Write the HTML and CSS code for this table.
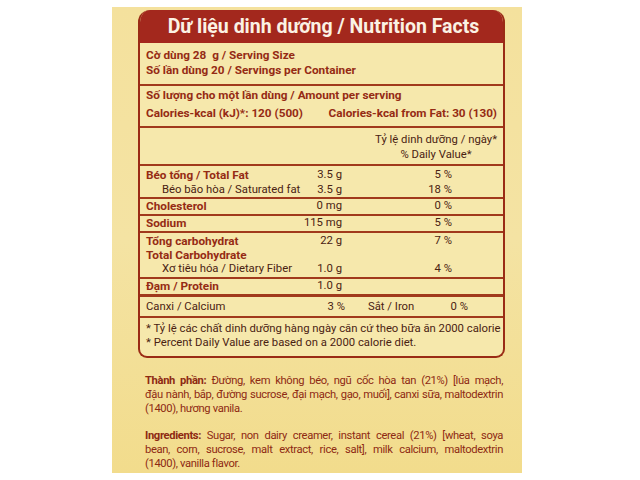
FILE: index.html
```html
<!DOCTYPE html>
<html lang="vi">
<head>
<meta charset="utf-8">
<link rel="stylesheet" href="styles.css">
</head>
<body>
<div class="pack">
  <div class="label">
    <div class="hdr">Dữ liệu dinh dưỡng / Nutrition Facts</div>
    <div class="sec serving b">
      <div>Cờ dùng 28&nbsp; g / Serving Size</div>
      <div>Số lần dùng 20 / Servings per Container</div>
    </div>
    <div class="sec amount b">
      <div>Số lượng cho một lần dùng / Amount per serving</div>
      <div class="cal"><span>Calories-kcal (kJ)*: 120 (500)</span><span>Calories-kcal from Fat: 30 (130)</span></div>
    </div>
    <div class="sec dv">
      <div class="dvbox">
        <div>Tỷ lệ dinh dưỡng / ngày*</div>
        <div>% Daily Value*</div>
      </div>
    </div>
    <div class="sec grid fat">
      <div class="n b">Béo tổng / Total Fat</div><div class="v">3.5 g</div><div class="p">5 %</div>
      <div class="n ind">Béo bão hòa / Saturated fat</div><div class="v">3.5 g</div><div class="p">18 %</div>
    </div>
    <div class="sec grid chol">
      <div class="n b">Cholesterol</div><div class="v">0 mg</div><div class="p">0 %</div>
    </div>
    <div class="sec grid sod">
      <div class="n b">Sodium</div><div class="v">115 mg</div><div class="p">5 %</div>
    </div>
    <div class="sec grid carb">
      <div class="n b">Tổng carbohydrat</div><div class="v">22 g</div><div class="p">7 %</div>
      <div class="n b">Total Carbohydrate</div><div class="v"></div><div class="p"></div>
      <div class="n ind">Xơ tiêu hóa / Dietary Fiber</div><div class="v">1.0 g</div><div class="p">4 %</div>
    </div>
    <div class="sec grid prot">
      <div class="n b">Đạm / Protein</div><div class="v">1.0 g</div><div class="p"></div>
    </div>
    <div class="sec minerals">
      <span class="mn">Canxi / Calcium</span><span class="mv">3 %</span><span class="mn2">Sắt / Iron</span><span class="mv2">0 %</span>
    </div>
    <div class="sec foot">
      <div>* Tỷ lệ các chất dinh dưỡng hàng ngày căn cứ theo bữa ăn 2000 calorie</div>
      <div>* Percent Daily Value are based on a 2000 calorie diet.</div>
    </div>
  </div>
  <div class="ingr first">
    <span class="ln"><b>Thành phần:</b> Đường, kem không béo, ngũ cốc hòa tan (21%) [lúa mạch,</span>
    <span class="ln">đậu nành, bắp, đường sucrose, đại mạch, gạo, muối], canxi sữa, maltodextrin</span>
    <span class="ln last">(1400), hương vanila.</span>
  </div>
  <div class="ingr second">
    <span class="ln"><b>Ingredients:</b> Sugar, non dairy creamer, instant cereal (21%) [wheat, soya</span>
    <span class="ln">bean, corn, sucrose, malt extract, rice, salt], milk calcium, maltodextrin</span>
    <span class="ln last">(1400), vanilla flavor.</span>
  </div>
</div>
</body>
</html>
```
FILE: styles.css
```css
html, body {
  margin: 0;
  padding: 0;
  background: #ffffff;
}
body {
  font-family: Roboto, "Liberation Sans", sans-serif;
  color: #4a2212;
}
.pack {
  margin: 7px 0 0 112px;
  width: 410px;
  height: 466px;
  box-sizing: border-box;
  padding: 3px 0 0 26px;
  background: linear-gradient(180deg, #f4e19d 0%, #f4e3a3 50%, #f2dc8c 100%);
}
.label {
  width: 367px;
  box-sizing: border-box;
  border: 2px solid #9a2b15;
  border-top: none;
  border-radius: 12px 12px 9px 9px;
  overflow: hidden;
  background: #f6e8ac;
}
.hdr {
  background: #a3281d;
  color: #fbf2e4;
  font-weight: 700;
  font-size: 19.5px;
  height: 33px;
  line-height: 33px;
  text-align: center;
  padding-left: 4px;
}
.sec {
  border-top: 2px solid #a13a1c;
  font-size: 11.3px;
  line-height: 14.5px;
  padding: 0 6px;
  white-space: nowrap;
}
.b {
  font-weight: 700;
  font-size: 11.75px;
  color: #952b14;
}
.serving {
  border-top: none;
  padding-top: 5px;
  padding-bottom: 7px;
}
.amount {
  padding-top: 2px;
  padding-bottom: 6px;
}
.cal {
  display: flex;
  justify-content: space-between;
  margin-top: 3px;
}
.dv {
  display: flex;
  justify-content: flex-end;
  padding-top: 5px;
  padding-bottom: 2px;
}
.dvbox {
  text-align: center;
}
.grid {
  display: grid;
  grid-template-columns: 150px 46px 110px;
}
.v, .p {
  text-align: right;
}
.ind {
  padding-left: 16px;
}
.fat {
  padding-top: 2px;
}
.sod {
  padding-bottom: 1px;
}
.carb {
  padding-top: 1px;
  line-height: 14.2px;
}
.prot {
  border-bottom: 1px solid #a13a1c;
  padding-bottom: 1px;
}
.minerals {
  display: grid;
  grid-template-columns: 140px 59px 23px 52px 48px;
  padding-top: 3px;
  padding-bottom: 1px;
}
.mv, .mv2 {
  text-align: right;
}
.mv { grid-column: 2; }
.mn2 { grid-column: 4; }
.mv2 { grid-column: 5; }
.foot {
  padding-top: 4px;
  padding-bottom: 5px;
}
.ingr {
  margin: 0 0 0 7px;
  width: 358px;
  font-size: 11.2px;
  line-height: 14px;
  letter-spacing: -0.35px;
  color: #8e2a13;
}
.ln {
  display: block;
  text-align: justify;
  text-align-last: justify;
}
.ln.last {
  text-align-last: left;
}
.first {
  margin-top: 16px;
}
.second {
  margin-top: 13px;
}
.ingr b {
  font-weight: 700;
}
```
